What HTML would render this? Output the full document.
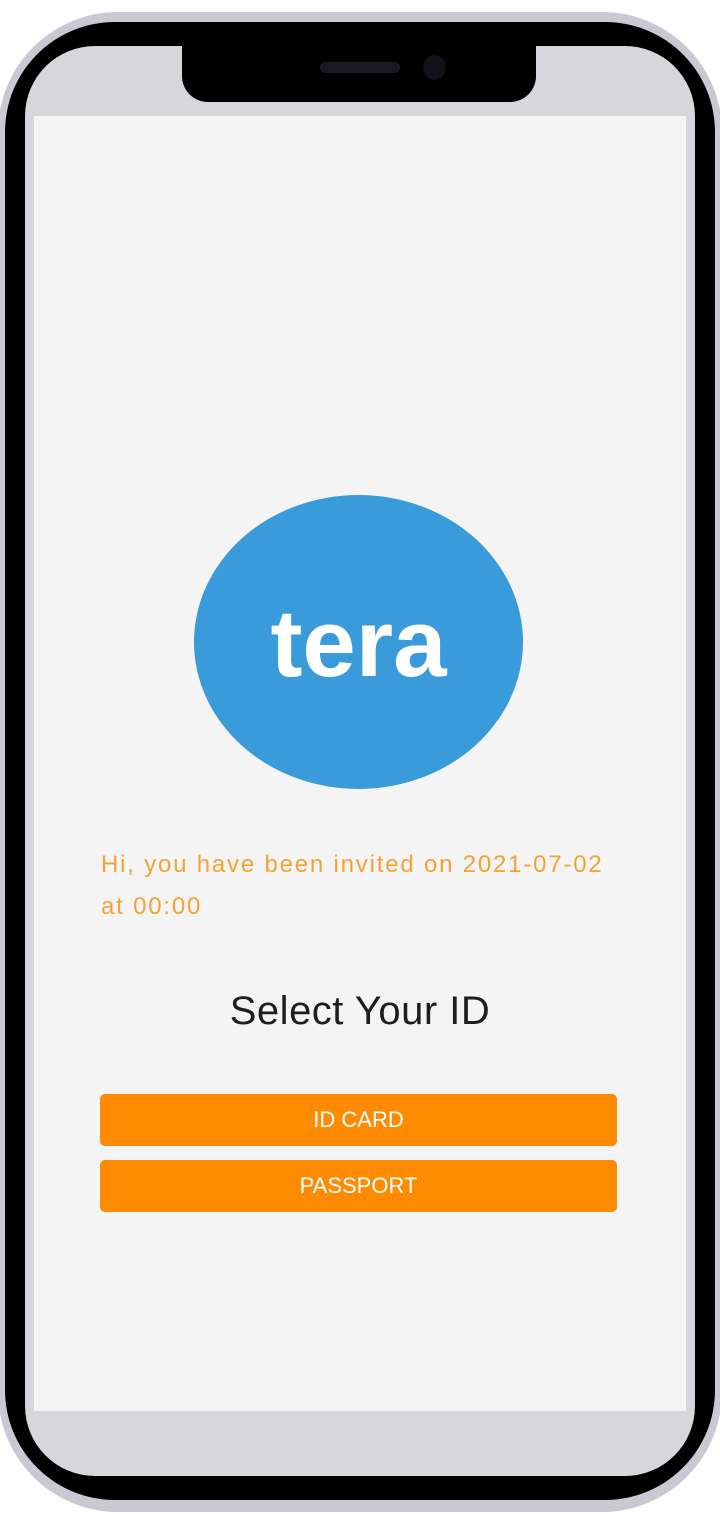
<!DOCTYPE html>
<html><head><meta charset="utf-8"><style>
html,body{margin:0;padding:0;background:#fff;}
body{width:720px;height:1514px;position:relative;overflow:hidden;font-family:"Liberation Sans",sans-serif;}
.abs{position:absolute;}
.silver{left:-2px;top:12px;width:724px;height:1500px;border-radius:120px;background:#c9c9d4;}
.bezel{left:5px;top:22px;width:710px;height:1478px;border-radius:110px;background:#000;}
.screen{left:25px;top:46px;width:670px;height:1430px;border-radius:70px;background:#d6d6db;overflow:hidden;}
.content{left:34px;top:116px;width:652px;height:1295px;background:#f4f4f4;}
.notch{left:182px;top:40px;width:354px;height:62px;background:#000;border-radius:0 0 26px 26px;}
.pill{left:320px;top:62px;width:80px;height:11px;border-radius:6px;background:#1a1a24;}
.cam{left:423px;top:55px;width:23px;height:25px;border-radius:50%;background:#111119;}
.logo{left:194px;top:495px;width:329px;height:294px;border-radius:50%;background:#3a9bdb;}
.tera{left:194px;top:594px;width:329px;text-align:center;color:#fff;font-weight:bold;font-size:96px;line-height:100px;letter-spacing:0px;}
.inv{left:101px;top:844px;width:560px;color:#f6a232;font-size:24px;line-height:42px;letter-spacing:1.8px;}
.sel{left:0;width:720px;top:990px;text-align:center;font-size:40px;line-height:42px;color:#1e1e1e;letter-spacing:0.5px;}
.btn{left:100px;width:517px;height:52px;background:#ff8c00;border-radius:5px;color:#fff;font-size:22px;line-height:52px;text-align:center;}
</style></head><body>
<div class="abs silver"></div>
<div class="abs bezel"></div>
<div class="abs screen"></div>
<div class="abs content"></div>
<div class="abs notch"></div>
<div class="abs pill"></div>
<div class="abs cam"></div>
<div class="abs logo"></div>
<div class="abs tera">tera</div>
<div class="abs inv">Hi, you have been invited on 2021-07-02<br>at 00:00</div>
<div class="abs sel">Select Your ID</div>
<div class="abs btn" style="top:1094px">ID CARD</div>
<div class="abs btn" style="top:1160px">PASSPORT</div>
</body></html>
